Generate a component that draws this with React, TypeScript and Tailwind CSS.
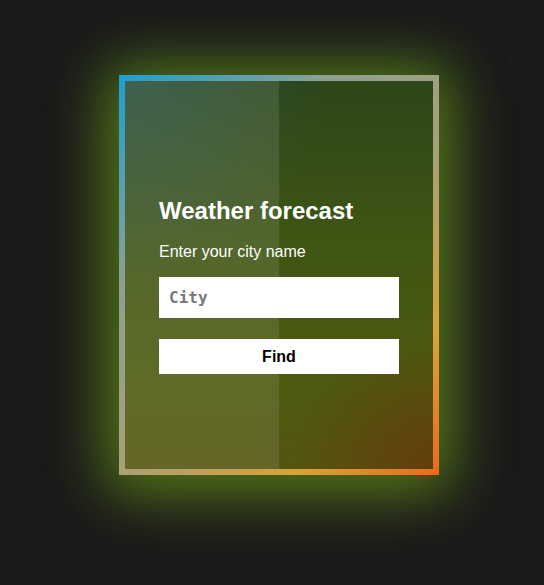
export default function App() {
  return (
    <div className="min-h-screen w-full bg-[#1b1b1b] pt-[75px] pl-[119px] font-['Liberation_Sans',Arial,sans-serif]">
      {/* Card with gradient frame and glow */}
      <div className="w-[320px] h-[400px] p-[6px] bg-[linear-gradient(135deg,#1d9fd2_0%,#8fa090_30%,#a8a078_55%,#d9a23a_80%,#ea6a1a_100%)] shadow-[0_0_50px_10px_rgba(85,150,25,0.6),0_12px_60px_8px_rgba(140,150,20,0.4)]">
        <div className="relative h-full w-full overflow-hidden bg-[radial-gradient(circle_at_100%_100%,rgba(110,45,10,0.6)_0%,rgba(110,45,10,0)_28%),radial-gradient(circle_at_0%_0%,rgba(40,90,110,0.4)_0%,rgba(40,90,110,0)_40%),linear-gradient(180deg,#2c4619_0%,#3e5514_40%,#4c5a10_75%,#545510_100%)]">
          <div className="absolute left-0 top-0 h-full w-1/2 bg-white/10" />

          <div className="relative flex flex-col px-[34px] pt-[116px]">
            <h1 className="text-[24px] font-bold text-white leading-[normal]">
              Weather forecast
            </h1>
            <p className="mt-[18px] text-[16px] text-white leading-[normal]">
              Enter your city name
            </p>
            <input
              type="text"
              placeholder="City"
              className="mt-[16px] h-[41px] w-[240px] bg-white px-[10px] text-[16px] font-bold text-black outline-none placeholder:text-[#777] font-['DejaVu_Sans_Mono',monospace]"
            />
            <button className="mt-[21px] h-[35px] w-[240px] bg-white text-[16px] font-bold text-black">
              Find
            </button>
          </div>
        </div>
      </div>
    </div>
  );
}
